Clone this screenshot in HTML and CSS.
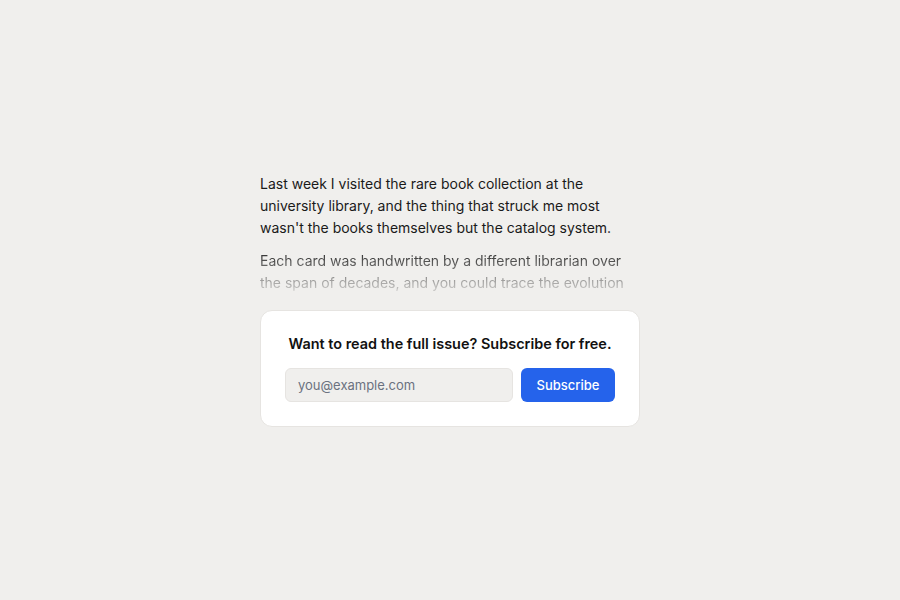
FILE: index.html
```html
<!DOCTYPE html>
<html lang="en">
<head>
<meta charset="utf-8">
<title>Newsletter preview</title>
<link rel="stylesheet" href="styles.css">
</head>
<body>
<main class="page">
  <article class="post">
    <p class="para">Last week I visited the rare book collection at the university library, and the thing that struck me most wasn't the books themselves but the catalog system.</p>
    <p class="para para-fade">Each card was handwritten by a different librarian over the span of decades, and you could trace the evolution of handwriting styles across the drawers.</p>
    <section class="gate">
      <h2 class="gate-title">Want to read the full issue? Subscribe for free.</h2>
      <form class="gate-form">
        <input class="gate-input" type="email" placeholder="you@example.com">
        <button class="gate-button" type="button">Subscribe</button>
      </form>
    </section>
  </article>
</main>
</body>
</html>
```
FILE: styles.css
```css
html, body {
  margin: 0;
  padding: 0;
  background: #f0efed;
}
body {
  font-family: Inter, "Noto Sans", sans-serif;
  color: #1a1a1a;
}
.page {
  height: 600px;
  display: flex;
  align-items: center;
  justify-content: center;
}
.post {
  width: 380px;
}
.para {
  margin: 0 0 11px;
  font-size: 14px;
  line-height: 22px;
}
.para-fade {
  height: 44px;
  overflow: hidden;
  margin-bottom: 16px;
  color: #1a1a1a;
  -webkit-mask-image: linear-gradient(to bottom, rgba(0,0,0,0.95) 0%, rgba(0,0,0,0.12) 100%);
  mask-image: linear-gradient(to bottom, rgba(0,0,0,0.95) 0%, rgba(0,0,0,0.12) 100%);
}
.gate {
  background: #fff;
  border: 1px solid #e6e4e1;
  border-radius: 12px;
  padding: 24px;
  text-align: center;
}
.gate-title {
  margin: 0 0 15px;
  font-size: 14.45px;
  line-height: 18px;
  font-weight: 600;
  color: #111;
}
.gate-form {
  display: flex;
  gap: 8px;
  margin: 0;
}
.gate-input {
  flex: 1;
  min-width: 0;
  height: 34px;
  box-sizing: border-box;
  padding: 0 12px;
  border: 1px solid #e6e4e1;
  border-radius: 6px;
  background: #f0efed;
  font-family: inherit;
  font-size: 13px;
  color: #1a1a1a;
}
.gate-input::placeholder {
  color: #6b7280;
}
.gate-button {
  width: 94px;
  height: 34px;
  border: 0;
  border-radius: 6px;
  background: #2563eb;
  color: #fff;
  font-family: inherit;
  font-size: 13px;
  font-weight: 500;
}
```
